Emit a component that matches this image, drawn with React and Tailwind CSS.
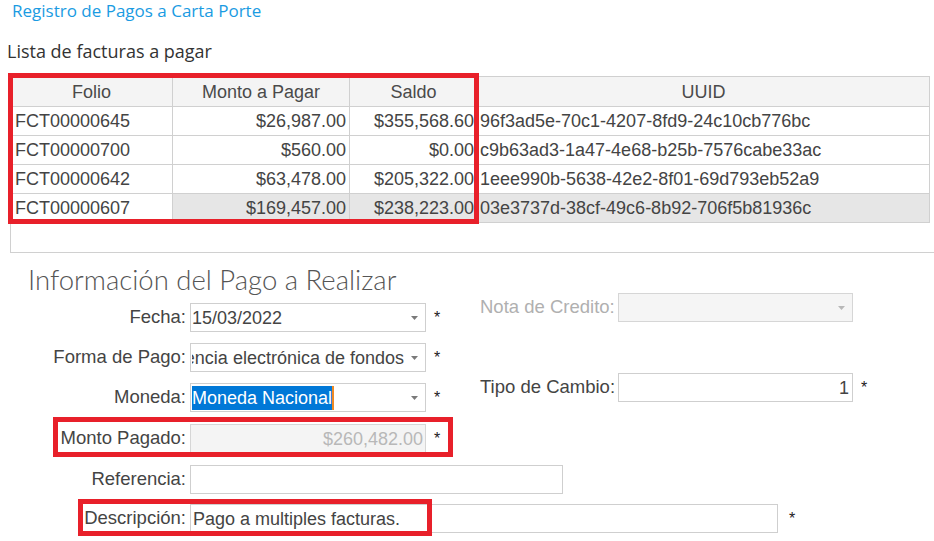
import React from 'react';

const rows = [
  { folio: 'FCT00000645', monto: '$26,987.00', saldo: '$355,568.60', uuid: '96f3ad5e-70c1-4207-8fd9-24c10cb776bc' },
  { folio: 'FCT00000700', monto: '$560.00', saldo: '$0.00', uuid: 'c9b63ad3-1a47-4e68-b25b-7576cabe33ac' },
  { folio: 'FCT00000642', monto: '$63,478.00', saldo: '$205,322.00', uuid: '1eee990b-5638-42e2-8f01-69d793eb52a9' },
  { folio: 'FCT00000607', monto: '$169,457.00', saldo: '$238,223.00', uuid: '03e3737d-38cf-49c6-8b92-706f5b81936c', selected: true },
];

function Arrow({ color = '#7a7a7a' }) {
  return (
    <svg width="7" height="4" viewBox="0 0 7 4" className="mr-[7px] shrink-0">
      <path d="M0 0 H7 L3.5 4 Z" fill={color} />
    </svg>
  );
}

function Star() {
  return <span className="ml-[8px] text-[16px] leading-none text-[#222]">*</span>;
}

function Label({ children, className = '' }) {
  return <div className={`text-right text-[18.5px] leading-none whitespace-nowrap ${className}`}>{children}</div>;
}

export default function App() {
  return (
    <div className="relative w-[934px] h-[541px] overflow-hidden bg-white font-['Liberation_Sans',Arial,sans-serif] text-[#444]">
      {/* encabezado */}
      <div className="h-[39px] pl-[12px] text-[17px] leading-[22px] text-[#1a9be2] font-['Open_Sans',sans-serif]">
        Registro de Pagos a Carta Porte
      </div>
      <div className="h-[24px] pl-[7px] text-[18px] leading-[24px] text-[#333] font-['Open_Sans',sans-serif]">
        Lista de facturas a pagar
      </div>

      {/* tabla */}
      <div className="ml-[10px] mt-[13px] h-[177px] border-l border-b border-[#d0d0d0]">
        <div className="w-[919px] grid grid-cols-[162px_177px_128px_452px] text-[18px] leading-none">
          {['Folio', 'Monto a Pagar', 'Saldo', 'UUID'].map((h) => (
            <div key={h} className="h-[31px] flex items-center justify-center bg-[#f4f4f4] border-t border-r border-b border-[#d0d0d0] text-[#4a4a4a]">
              {h}
            </div>
          ))}
          {rows.map((r) => (
            <React.Fragment key={r.folio}>
              <div className="h-[29px] flex items-center pl-[4px] bg-white border-r border-b border-[#d0d0d0]">{r.folio}</div>
              <div className={`h-[29px] flex items-center justify-end pr-[3px] border-r border-b border-[#d0d0d0] ${r.selected ? 'bg-[#e6e6e6]' : 'bg-white'}`}>{r.monto}</div>
              <div className={`h-[29px] flex items-center justify-end pr-[3px] border-r border-b border-[#d0d0d0] ${r.selected ? 'bg-[#e6e6e6]' : 'bg-white'}`}>{r.saldo}</div>
              <div className={`h-[29px] flex items-center pl-[2px] border-r border-b border-[#d0d0d0] ${r.selected ? 'bg-[#e6e6e6]' : 'bg-white'}`}>{r.uuid}</div>
            </React.Fragment>
          ))}
        </div>
      </div>

      {/* información del pago */}
      <div className="mt-[13px] h-[27px] pl-[28px] text-[27.5px] leading-[28px] font-light text-[#555] font-['Lato',sans-serif]">
        Información del Pago a Realizar
      </div>

      <div className="flex h-[119px]">
        <div className="w-[480px] pt-[10px] flex flex-col gap-[11px]">
          <div className="flex items-center h-[29px]">
            <Label className="w-[186px]">Fecha:</Label>
            <div className="ml-[4px] w-[236px] h-[29px] border border-[#cfcfcf] flex items-center">
              <div className="flex-1 pl-[1px] text-[18px] leading-none">15/03/2022</div>
              <Arrow />
            </div>
            <Star />
          </div>
          <div className="flex items-center h-[29px]">
            <Label className="w-[186px]">Forma de Pago:</Label>
            <div className="ml-[4px] w-[236px] h-[29px] border border-[#cfcfcf] flex items-center overflow-hidden">
              <div className="flex-1 ml-[1px] mr-[7px] overflow-hidden flex justify-end whitespace-nowrap text-[18px] leading-none">
                <span className="shrink-0">Transferencia electrónica de fondos</span>
              </div>
              <Arrow />
            </div>
            <Star />
          </div>
          <div className="flex items-center h-[29px]">
            <Label className="w-[186px]">Moneda:</Label>
            <div className="ml-[4px] w-[236px] h-[29px] border border-[#cfcfcf] flex items-center">
              <div className="flex-1 pl-[1px] flex items-center">
                <span className="bg-[#0078d7] text-white text-[18px] leading-[24px]">Moneda Nacional</span>
                <span className="w-[2px] h-[24px] bg-[#f08a24]" />
              </div>
              <Arrow />
            </div>
            <Star />
          </div>
        </div>

        <div className="flex flex-col">
          <div className="flex items-center h-[29px]">
            <Label className="w-[133px] text-[#b0b0b0]">Nota de Credito:</Label>
            <div className="ml-[5px] w-[235px] h-[29px] border border-[#d6d6d6] bg-[#f5f5f5] flex items-center justify-end">
              <Arrow color="#b8b8b8" />
            </div>
          </div>
          <div className="flex items-center h-[29px] mt-[51px]">
            <Label className="w-[133px]">Tipo de Cambio:</Label>
            <div className="ml-[5px] w-[235px] h-[29px] border border-[#cfcfcf] flex items-center justify-end pr-[3px] text-[18px] leading-none">
              1
            </div>
            <Star />
          </div>
        </div>
      </div>

      <div className="flex items-center h-[29px] mt-[12px]">
        <Label className="w-[186px]">Monto Pagado:</Label>
        <div className="ml-[4px] w-[236px] h-[29px] border border-[#d6d6d6] bg-[#f4f4f4] flex items-center justify-end pr-[2px] text-[18px] leading-none text-[#b8b8b8]">
          $260,482.00
        </div>
        <Star />
      </div>
      <div className="flex items-center h-[29px] mt-[12px]">
        <Label className="w-[186px]">Referencia:</Label>
        <div className="ml-[4px] w-[373px] h-[29px] border border-[#cfcfcf]" />
      </div>
      <div className="flex items-center h-[29px] mt-[10px]">
        <Label className="w-[186px]">Descripción:</Label>
        <div className="ml-[4px] w-[588px] h-[29px] border border-[#cfcfcf] flex items-center pl-[2px] text-[18px] leading-none">
          Pago a multiples facturas.
        </div>
        <span className="ml-[11px] text-[16px] leading-none text-[#222]">*</span>
      </div>

      {/* marcas rojas */}
      <div className="absolute left-[8px] top-[73px] w-[471px] h-[151px] border-[5px] border-[#e8202a]" />
      <div className="absolute left-[53px] top-[417px] w-[400px] h-[40px] border-[5px] border-[#e8202a]" />
      <div className="absolute left-[78px] top-[499px] w-[354px] h-[37px] border-[5px] border-[#e8202a]" />
    </div>
  );
}
